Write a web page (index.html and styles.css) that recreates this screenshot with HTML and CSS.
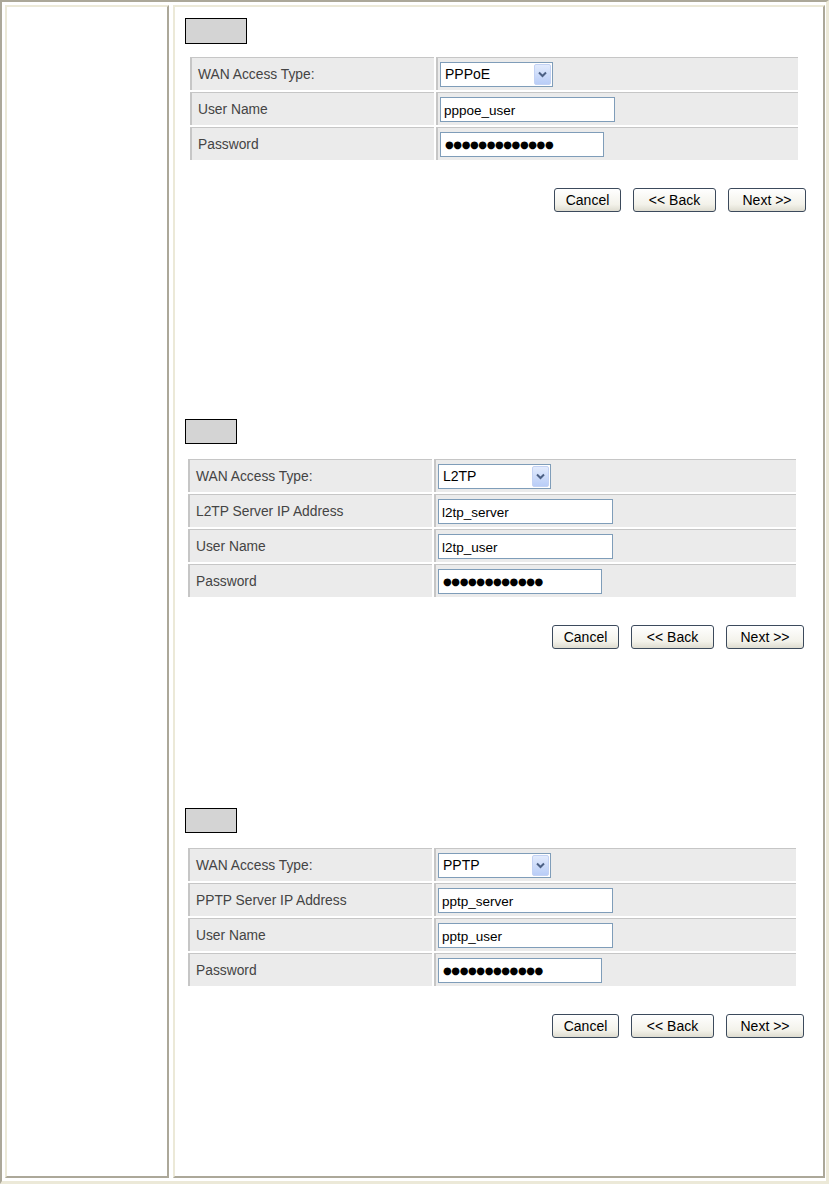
FILE: index.html
```html
<!DOCTYPE html>
<html lang="en">
<head>
<meta charset="utf-8">
<title>WAN Setup Wizard</title>
<link rel="stylesheet" href="styles.css">
</head>
<body>
<div class="frame">
  <div class="side"></div>
  <div class="main">

    <section class="step step--pppoe">
      <div class="tag tag--wide"></div>
      <div class="body body--pppoe">
        <div class="form">
          <div class="label">WAN Access Type:</div>
          <div class="value">
            <div class="select"><span class="select-text">PPPoE</span><span class="select-btn"><svg width="9" height="7" viewBox="0 0 9 7"><path d="M1 1.5 L4.5 5 L8 1.5" fill="none" stroke="#4d6185" stroke-width="2"/></svg></span></div>
          </div>
          <div class="label">User Name</div>
          <div class="value"><input class="field" type="text" value="pppoe_user" readonly></div>
          <div class="label">Password</div>
          <div class="value"><div class="field field--pass">●●●●●●●●●●●●●</div></div>
        </div>
        <div class="actions">
          <button class="btn btn--cancel" type="button">Cancel</button>
          <button class="btn btn--back" type="button">&lt;&lt; Back</button>
          <button class="btn btn--next" type="button">Next &gt;&gt;</button>
        </div>
      </div>
    </section>

    <section class="step step--l2tp">
      <div class="tag"></div>
      <div class="body">
        <div class="form">
          <div class="label">WAN Access Type:</div>
          <div class="value">
            <div class="select"><span class="select-text">L2TP</span><span class="select-btn"><svg width="9" height="7" viewBox="0 0 9 7"><path d="M1 1.5 L4.5 5 L8 1.5" fill="none" stroke="#4d6185" stroke-width="2"/></svg></span></div>
          </div>
          <div class="label">L2TP Server IP Address</div>
          <div class="value"><input class="field" type="text" value="l2tp_server" readonly></div>
          <div class="label">User Name</div>
          <div class="value"><input class="field" type="text" value="l2tp_user" readonly></div>
          <div class="label">Password</div>
          <div class="value"><div class="field field--pass">●●●●●●●●●●●●</div></div>
        </div>
        <div class="actions">
          <button class="btn btn--cancel" type="button">Cancel</button>
          <button class="btn btn--back" type="button">&lt;&lt; Back</button>
          <button class="btn btn--next" type="button">Next &gt;&gt;</button>
        </div>
      </div>
    </section>

    <section class="step step--pptp">
      <div class="tag"></div>
      <div class="body">
        <div class="form">
          <div class="label">WAN Access Type:</div>
          <div class="value">
            <div class="select"><span class="select-text">PPTP</span><span class="select-btn"><svg width="9" height="7" viewBox="0 0 9 7"><path d="M1 1.5 L4.5 5 L8 1.5" fill="none" stroke="#4d6185" stroke-width="2"/></svg></span></div>
          </div>
          <div class="label">PPTP Server IP Address</div>
          <div class="value"><input class="field" type="text" value="pptp_server" readonly></div>
          <div class="label">User Name</div>
          <div class="value"><input class="field" type="text" value="pptp_user" readonly></div>
          <div class="label">Password</div>
          <div class="value"><div class="field field--pass">●●●●●●●●●●●●</div></div>
        </div>
        <div class="actions">
          <button class="btn btn--cancel" type="button">Cancel</button>
          <button class="btn btn--back" type="button">&lt;&lt; Back</button>
          <button class="btn btn--next" type="button">Next &gt;&gt;</button>
        </div>
      </div>
    </section>

  </div>
</div>
</body>
</html>
```

FILE: styles.css
```css
* { box-sizing: border-box; }

html, body {
  margin: 0;
  padding: 0;
  background: #ffffff;
}

body {
  font-family: "Liberation Sans", Arial, sans-serif;
  color: #333333;
}

.frame {
  width: 829px;
  height: 1184px;
  display: flex;
  gap: 4px;
  border-style: solid;
  border-width: 2px 3px 3px 2px;
  border-color: #aca899 #ece9d8 #ece9d8 #aca899;
  padding: 3px 1px 3px 3px;
}

.side,
.main {
  background: #ffffff;
  border-style: solid;
  border-width: 2px;
  border-color: #ece9d8 #aca899 #aca899 #ece9d8;
}

.side {
  width: 164px;
  flex: none;
}

.main {
  flex: 1;
  padding-left: 10px;
}

/* sections */
.step--pppoe { margin-top: 11px; }
.step--l2tp  { margin-top: 207px; }
.step--pptp  { margin-top: 159px; }

.tag {
  width: 52px;
  height: 25px;
  background: #d4d4d4;
  border: 1px solid #000000;
}

.tag--wide {
  width: 62px;
  height: 26px;
}

.body {
  margin-left: 3px;
  width: 616px;
  margin-top: 15px;
}

.body--pppoe {
  margin-left: 5px;
  margin-top: 13px;
}

/* form table */
.form {
  width: 608px;
  display: grid;
  grid-template-columns: 244px 362px;
  grid-auto-rows: 33px;
  gap: 2px;
  background: #ffffff;
}

.label,
.value {
  background: #ebebeb;
  border-top: 1px solid #c6c6c6;
  border-left: 2px solid #c6c6c6;
  display: flex;
  align-items: center;
}

.label {
  padding-left: 6px;
  font-size: 13.8px;
  color: #444444;
}

.value {
  padding-left: 2px;
}

/* select */
.select {
  width: 113px;
  height: 25px;
  display: flex;
  align-items: center;
  justify-content: space-between;
  background: #ffffff;
  border: 1px solid #7f9db9;
  padding: 1px;
}

.select-text {
  padding-left: 3px;
  font-size: 14px;
  color: #000000;
}

.select-btn {
  width: 17px;
  height: 21px;
  display: flex;
  align-items: center;
  justify-content: center;
  border: 1px solid #c3d2f4;
  border-radius: 2px;
  background: linear-gradient(#e2ebfd, #b9cdf7);
}

/* inputs */
.field {
  width: 175px;
  height: 25px;
  margin: 0;
  padding: 2px 3px 0;
  border: 1px solid #7f9db9;
  background: #ffffff;
  font-family: "Liberation Sans", Arial, sans-serif;
  font-size: 13.5px;
  color: #000000;
  outline: none;
}

.field--pass {
  width: 164px;
  display: flex;
  align-items: center;
  padding-top: 0;
  font-family: "DejaVu Sans", sans-serif;
  font-size: 10px;
  letter-spacing: -0.4px;
  padding-left: 4px;
}

/* buttons */
.actions {
  display: flex;
  justify-content: flex-end;
  gap: 12px;
  margin-top: 28px;
}

.btn {
  height: 24px;
  margin: 0;
  padding: 0;
  border: 1px solid #3c4a5c;
  border-radius: 3px;
  background: linear-gradient(#ffffff, #f3f2ea 70%, #dedcd0);
  font-family: "Liberation Sans", Arial, sans-serif;
  font-size: 14px;
  color: #000000;
}

.btn--cancel { width: 67px; }
.btn--back   { width: 83px; }
.btn--next   { width: 78px; }
```
